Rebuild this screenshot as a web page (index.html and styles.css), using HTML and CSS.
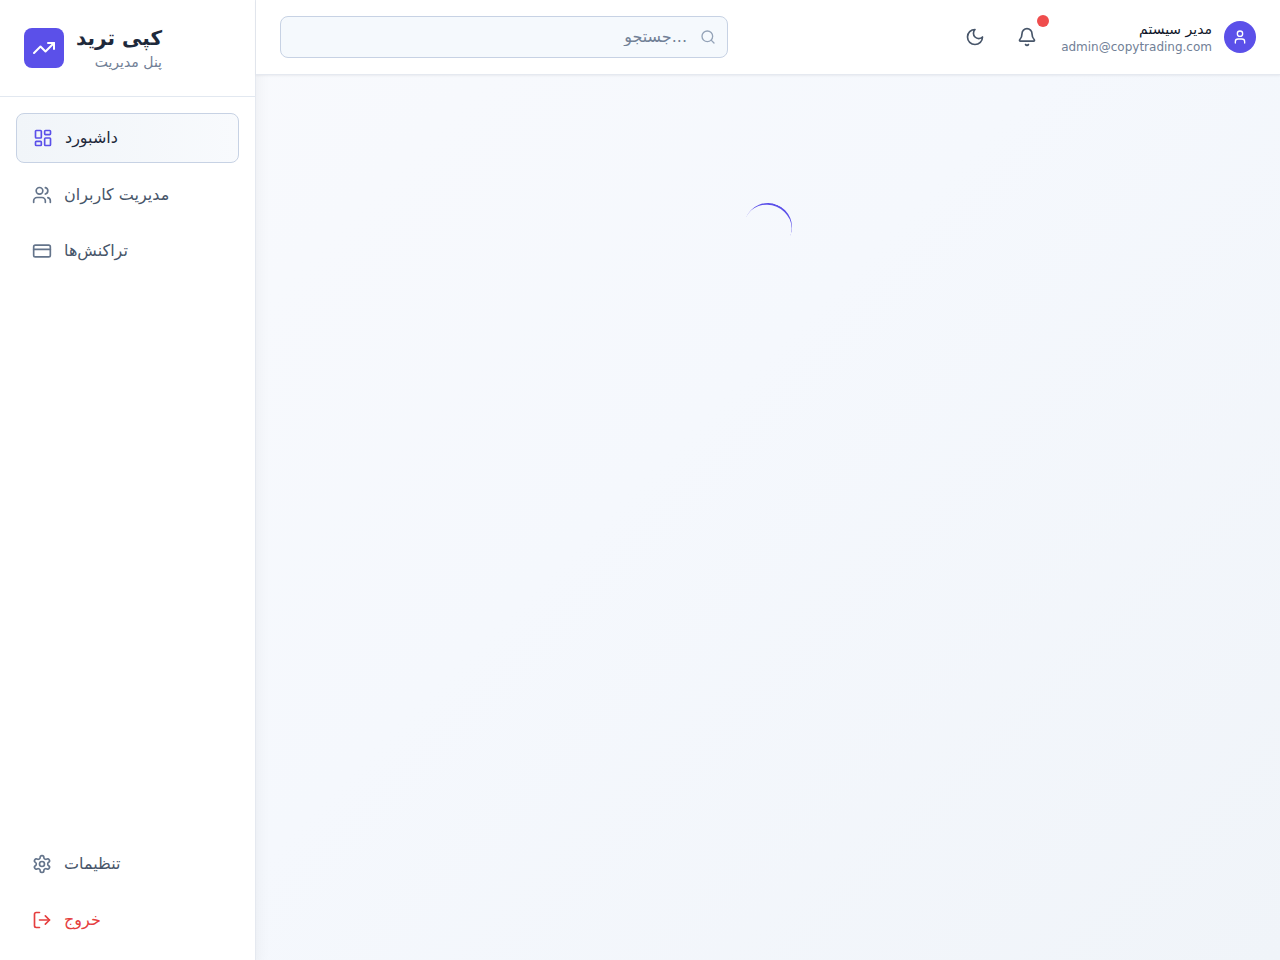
FILE: index.html
```
<!DOCTYPE html>
<html lang="fa">
<head>
  <meta charset="UTF-8">
  <meta name="viewport" content="width=device-width, initial-scale=1.0">
  <title>کپی ترید - پنل مدیریت</title>
  <link rel="stylesheet" href="styles.css">
</head>
<body>
  <div class="layout">
    <aside class="sidebar">
      <div class="brand">
        <div class="brand-logo">
          <svg class="icon icon-lg" viewBox="0 0 24 24"><path d="M16 7h6v6"/><path d="m22 7-8.5 8.5-5-5L2 17"/></svg>
        </div>
        <div class="brand-text">
          <h1>کپی ترید</h1>
          <p>پنل مدیریت</p>
        </div>
      </div>

      <nav class="menu">
        <a href="#dashboard" class="menu-item active">
          <svg class="icon" viewBox="0 0 24 24"><rect x="3" y="3" width="7" height="9" rx="1"/><rect x="14" y="3" width="7" height="5" rx="1"/><rect x="14" y="12" width="7" height="9" rx="1"/><rect x="3" y="16" width="7" height="5" rx="1"/></svg>
          <span>داشبورد</span>
        </a>
        <a href="#users" class="menu-item">
          <svg class="icon" viewBox="0 0 24 24"><path d="M16 21v-2a4 4 0 0 0-4-4H6a4 4 0 0 0-4 4v2"/><circle cx="9" cy="7" r="4"/><path d="M22 21v-2a4 4 0 0 0-3-3.87"/><path d="M16 3.13a4 4 0 0 1 0 7.75"/></svg>
          <span>مدیریت کاربران</span>
        </a>
        <a href="#transactions" class="menu-item">
          <svg class="icon" viewBox="0 0 24 24"><rect x="2" y="5" width="20" height="14" rx="2"/><path d="M2 10h20"/></svg>
          <span>تراکنش‌ها</span>
        </a>
      </nav>

      <div class="menu menu-bottom">
        <a href="#settings" class="menu-item">
          <svg class="icon" viewBox="0 0 24 24"><path d="M12.22 2h-.44a2 2 0 0 0-2 2v.18a2 2 0 0 1-1 1.73l-.43.25a2 2 0 0 1-2 0l-.15-.08a2 2 0 0 0-2.73.73l-.22.38a2 2 0 0 0 .73 2.73l.15.1a2 2 0 0 1 1 1.72v.51a2 2 0 0 1-1 1.74l-.15.09a2 2 0 0 0-.73 2.73l.22.38a2 2 0 0 0 2.73.73l.15-.08a2 2 0 0 1 2 0l.43.25a2 2 0 0 1 1 1.73V20a2 2 0 0 0 2 2h.44a2 2 0 0 0 2-2v-.18a2 2 0 0 1 1-1.73l.43-.25a2 2 0 0 1 2 0l.15.08a2 2 0 0 0 2.73-.73l.22-.39a2 2 0 0 0-.73-2.73l-.15-.08a2 2 0 0 1-1-1.74v-.5a2 2 0 0 1 1-1.74l.15-.09a2 2 0 0 0 .73-2.73l-.22-.38a2 2 0 0 0-2.73-.73l-.15.08a2 2 0 0 1-2 0l-.43-.25a2 2 0 0 1-1-1.73V4a2 2 0 0 0-2-2z"/><circle cx="12" cy="12" r="3"/></svg>
          <span>تنظیمات</span>
        </a>
        <button type="button" class="menu-item logout">
          <svg class="icon" viewBox="0 0 24 24"><path d="M9 21H5a2 2 0 0 1-2-2V5a2 2 0 0 1 2-2h4"/><path d="m16 17 5-5-5-5"/><path d="M21 12H9"/></svg>
          <span>خروج</span>
        </button>
      </div>
    </aside>

    <div class="content">
      <header class="topbar">
        <div class="search">
          <input type="text" class="search-input" placeholder="جستجو..." aria-label="جستجو">
          <svg class="icon icon-sm search-icon" viewBox="0 0 24 24"><circle cx="11" cy="11" r="8"/><path d="m21 21-4.3-4.3"/></svg>
        </div>
        <div class="actions">
          <button type="button" class="icon-btn" aria-label="حالت تاریک">
            <svg class="icon" viewBox="0 0 24 24"><path d="M12 3a6 6 0 0 0 9 9 9 9 0 1 1-9-9Z"/></svg>
          </button>
          <button type="button" class="icon-btn" aria-label="اعلان‌ها">
            <svg class="icon" viewBox="0 0 24 24"><path d="M10.27 21a2 2 0 0 0 3.46 0"/><path d="M3.26 15.33A1 1 0 0 0 4 17h16a1 1 0 0 0 .74-1.67C19.41 13.96 18 12.5 18 8A6 6 0 0 0 6 8c0 4.5-1.41 5.96-2.74 7.33"/></svg>
            <span class="badge"></span>
          </button>
          <div class="profile">
            <div class="profile-text">
              <p class="profile-name">مدیر سیستم</p>
              <p class="profile-email">admin@copytrading.com</p>
            </div>
            <div class="avatar">
              <svg class="icon icon-sm" viewBox="0 0 24 24"><circle cx="12" cy="7" r="4"/><path d="M19 21v-2a4 4 0 0 0-4-4H9a4 4 0 0 0-4 4v2"/></svg>
            </div>
          </div>
        </div>
      </header>

      <main class="main">
        <div class="loading">
          <div class="spinner" role="status" aria-label="در حال بارگذاری"></div>
        </div>
      </main>
    </div>
  </div>
</body>
</html>
```
FILE: styles.css
```
* {
  box-sizing: border-box;
  margin: 0;
  padding: 0;
}
body {
  font-family: "DejaVu Sans", sans-serif;
  font-size: 16px;
  line-height: 24px;
  color: #0f172a;
}
a {
  text-decoration: none;
}
button {
  font: inherit;
  border: none;
  background: none;
  cursor: pointer;
}
.icon {
  width: 20px;
  height: 20px;
  flex-shrink: 0;
  fill: none;
  stroke: currentColor;
  stroke-width: 2;
  stroke-linecap: round;
  stroke-linejoin: round;
}
.icon-sm { width: 16px; height: 16px; }
.icon-lg { width: 24px; height: 24px; }

.layout {
  display: flex;
  min-height: 100vh;
  background: linear-gradient(135deg, #f9fafd, #f5f8fd 50%, #f0f4f9);
}

/* Sidebar */
.sidebar {
  display: flex;
  flex-direction: column;
  width: 256px;
  flex-shrink: 0;
  background: #fff;
  border-right: 1px solid #e5e9f0;
  box-shadow: 0 10px 15px rgba(15, 23, 42, 0.06);
}
.brand {
  display: flex;
  align-items: center;
  gap: 12px;
  padding: 24px;
  border-bottom: 1px solid #e2e8f0;
}
.brand-logo {
  display: flex;
  align-items: center;
  justify-content: center;
  width: 40px;
  height: 40px;
  border-radius: 8px;
  background: #5b50e9;
  color: #fff;
}
.brand-text {
  text-align: right;
}
.brand-text h1 {
  font-size: 20px;
  line-height: 28px;
  color: #1e293b;
}
.brand-text p {
  font-size: 14px;
  line-height: 20px;
  color: #718096;
}
.menu {
  display: flex;
  flex-direction: column;
  gap: 8px;
  padding: 16px;
}
.menu-bottom {
  margin-top: auto;
}
.menu-item {
  display: flex;
  align-items: center;
  gap: 12px;
  padding: 12px 16px;
  border-radius: 8px;
  color: #475569;
}
.menu-item .icon {
  color: #64748b;
}
.menu-item.active {
  border: 1px solid #c7d2e4;
  background: linear-gradient(90deg, #f1f5f9, #f8fafd);
  color: #1e293b;
}
.menu-item.active .icon {
  color: #5b50e9;
}
.menu-item.logout,
.menu-item.logout .icon {
  color: #e53e3e;
}

/* Header */
.content {
  display: flex;
  flex-direction: column;
  flex: 1;
  min-width: 0;
}
.topbar {
  display: flex;
  align-items: center;
  justify-content: space-between;
  gap: 24px;
  padding: 16px 24px;
  background: #fff;
  border-bottom: 1px solid #e5e9f0;
  box-shadow: 0 1px 2px rgba(15, 23, 42, 0.06);
}
.search {
  position: relative;
  flex: 1;
  max-width: 448px;
}
.search-input {
  display: block;
  width: 100%;
  padding: 8px 40px 8px 16px;
  font: inherit;
  text-align: right;
  color: #0f172a;
  background: #f5f9fd;
  border: 1px solid #c7d2e4;
  border-radius: 8px;
}
.search-input::placeholder {
  color: #718096;
}
.search-icon {
  position: absolute;
  top: 50%;
  right: 12px;
  transform: translateY(-50%);
  color: #94a3b8;
}
.actions {
  display: flex;
  align-items: center;
  gap: 16px;
}
.icon-btn {
  position: relative;
  display: flex;
  padding: 8px;
  color: #475569;
}
.badge {
  position: absolute;
  top: -4px;
  right: -4px;
  width: 12px;
  height: 12px;
  border-radius: 50%;
  background: #ef4d4d;
}
.profile {
  display: flex;
  align-items: center;
  gap: 12px;
}
.profile-text {
  text-align: right;
}
.profile-name {
  font-size: 14px;
  line-height: 20px;
}
.profile-email {
  font-size: 12px;
  line-height: 16px;
  color: #718096;
}
.avatar {
  display: flex;
  align-items: center;
  justify-content: center;
  width: 32px;
  height: 32px;
  border-radius: 50%;
  background: #5b50e9;
  color: #fff;
}

/* Page content */
.main {
  flex: 1;
  padding: 24px;
}
.loading {
  display: flex;
  align-items: center;
  justify-content: center;
  height: 256px;
}
.spinner {
  width: 48px;
  height: 48px;
  border-top: 2px solid #5b50e9;
  border-radius: 50%;
  transform: rotate(23deg);
}
```
